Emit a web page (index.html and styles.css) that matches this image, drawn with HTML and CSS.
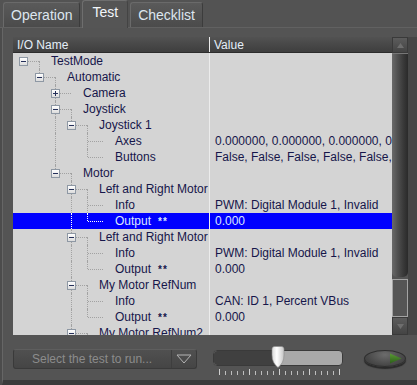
FILE: index.html
```html
<!DOCTYPE html>
<html lang="en">
<head>
  <meta charset="UTF-8">
  <title>Test</title>
  <link rel="stylesheet" href="styles.css">
</head>
<body>

<div class="tabs">
  <div class="tab">Operation</div>
  <div class="tab active">Test</div>
  <div class="tab">Checklist</div>
</div>

<div class="panel">
  <div class="grid">
    <div class="table">
      <div class="head">
        <div class="hcell name-col">I/O Name</div>
        <div class="hcell val-col">Value</div>
      </div>
      <div class="body" id="body"></div>
    </div>
    <div class="vscroll">
      <div class="sbtn up"><svg width="7" height="5" viewBox="0 0 7 5"><path d="M3.5 0 L7 5 H0 Z" fill="#6e6e6e"/></svg></div>
      <div class="thumb"></div>
      <div class="trough"></div>
      <div class="sbtn down"><svg width="7" height="5" viewBox="0 0 7 5"><path d="M0 0 H7 L3.5 5 Z" fill="#6e6e6e"/></svg></div>
    </div>
  </div>

  <div class="controls">
    <div class="select">
      <span class="select-text">Select the test to run...</span>
      <span class="select-arrow">
        <svg width="16" height="10" viewBox="0 0 16 10"><path d="M1 1 H15 L8 9 Z" fill="none" stroke="#b4b4b4" stroke-width="1"/></svg>
      </span>
    </div>
    <div class="slider">
      <div class="track">
        <div class="fill"></div>
        <svg class="knob" width="14" height="22" viewBox="0 0 14 22">
          <defs>
            <linearGradient id="kg" x1="0" y1="0" x2="1" y2="0">
              <stop offset="0" stop-color="#d8d8d8"/>
              <stop offset="0.4" stop-color="#ffffff"/>
              <stop offset="1" stop-color="#c4c4c4"/>
            </linearGradient>
          </defs>
          <path d="M1 3 Q1 0.5 3.5 0.5 H10.5 Q13 0.5 13 3 V9 Q13 17 7 21.5 Q1 17 1 9 Z" fill="url(#kg)" stroke="#8a8a8a" stroke-width="0.6"/>
        </svg>
      </div>
      <div class="ticks"></div>
    </div>
    <div class="run">
      <svg width="13" height="11" viewBox="0 0 13 11">
        <defs>
          <linearGradient id="pg" x1="0" y1="0" x2="0" y2="1">
            <stop offset="0" stop-color="#5a9a34"/>
            <stop offset="1" stop-color="#2c5e1a"/>
          </linearGradient>
        </defs>
        <path d="M1 0.5 L12.5 5.5 L1 10.5 Z" fill="url(#pg)"/>
      </svg>
    </div>
  </div>
</div>

<script>
  // label, value, cells (one char per indent cell), box on node cell, selected
  // cells: ' ' blank, p pipe, t tee, e elbow, r root, d line down to children
  const rows = [
    ['TestMode', '', 'rd', '-'],
    ['Automatic', '', ' ed', '-'],
    ['Camera', '', '  t ', '+'],
    ['Joystick', '', '  td', '-'],
    ['Joystick 1', '', '  ped', '-'],
    ['Axes', '0.000000, 0.000000, 0.000000, 0.000000', '  p t ', ''],
    ['Buttons', 'False, False, False, False, False, False', '  p e ', ''],
    ['Motor', '', '  ed', '-'],
    ['Left and Right Motor', '', '   td', '-'],
    ['Info', 'PWM: Digital Module 1, Invalid', '   pt ', ''],
    ['Output', '0.000', '   pe ', '', true],
    ['Left and Right Motor', '', '   td', '-'],
    ['Info', 'PWM: Digital Module 1, Invalid', '   pt ', ''],
    ['Output', '0.000', '   pe ', ''],
    ['My Motor RefNum', '', '   td', '-'],
    ['Info', 'CAN: ID 1, Percent VBus', '   pt ', ''],
    ['Output', '0.000', '   pe ', ''],
    ['My Motor RefNum2', '', '   td', '-']
  ];

  const kinds = { ' ': '', p: 'pipe', t: 'tee', e: 'elbow', r: 'root', d: 'down' };
  const body = document.getElementById('body');

  rows.forEach(([label, value, cells, box, sel]) => {
    const row = document.createElement('div');
    row.className = 'row' + (sel ? ' sel' : '');

    const name = document.createElement('div');
    name.className = 'name-col name';
    [...cells].forEach((ch, i) => {
      const c = document.createElement('span');
      c.className = 'c ' + kinds[ch];
      if (box && i === cells.length - 2) {
        const b = document.createElement('i');
        b.className = 'box ' + (box === '+' ? 'plus' : 'minus');
        c.appendChild(b);
      }
      name.appendChild(c);
    });

    const text = document.createElement('span');
    text.className = 'label';
    text.textContent = label;
    if (label === 'Output') {
      const m = document.createElement('span');
      m.className = 'mark';
      m.textContent = '**';
      text.appendChild(m);
    }
    name.appendChild(text);

    const val = document.createElement('div');
    val.className = 'val-col val';
    val.textContent = value;

    row.appendChild(name);
    row.appendChild(val);
    body.appendChild(row);
  });
</script>

</body>
</html>
```

FILE: styles.css
```css
body {
  margin: 0;
  width: 417px;
  height: 385px;
  overflow: hidden;
  background: #4c4c4c;
  font-family: "Liberation Sans", Arial, sans-serif;
}

/* tabs */
.tabs {
  display: flex;
  align-items: flex-end;
  gap: 2px;
  height: 27px;
  padding-left: 3px;
  background: #535353;
  border-bottom: 1px solid #616161;
}
.tab {
  box-sizing: border-box;
  height: 25px;
  padding: 0 7px;
  margin-bottom: 0;
  font-size: 14px;
  line-height: 25px;
  color: #dde6ef;
  background: linear-gradient(#5a5a5a, #4b4b4b);
  border: 1px solid #6a6a6a;
  border-right-color: #3c3c3c;
  border-bottom: none;
  border-radius: 3px 3px 0 0;
}
.tab.active {
  height: 28px;
  margin-bottom: -1px;
  padding: 0 9px;
  line-height: 22px;
  color: #f2f6fa;
  background: #555555;
  border-color: #6e6e6e;
  border-right-color: #444;
}

/* panel */
.panel {
  box-sizing: border-box;
  height: 357px;
  margin-left: 2px;
  padding: 9px 0 0 10px;
  background: #545454;
  border-left: 1px solid #666;
  border-bottom: 5px solid #3b3b3b;
}
.grid {
  display: flex;
  border-right: 9px solid #464646;
}
.table {
  width: 379px;
}

.head {
  display: flex;
  height: 16px;
  background: linear-gradient(#525252, #3e3e3e);
  border-bottom: 1px solid #2c2c2c;
  box-sizing: border-box;
}
.hcell {
  font-size: 12px;
  line-height: 16px;
  color: #e4eef8;
  white-space: nowrap;
}
.name-col {
  width: 197px;
  box-sizing: border-box;
  border-right: 1px solid #ececec;
  flex: none;
}
.val-col {
  flex: 1;
  min-width: 0;
}
.head .name-col {
  padding-left: 4px;
  border-radius: 0 0 0 0;
}
.head .val-col {
  padding-left: 4px;
}

.body {
  height: 282px;
  overflow: hidden;
  background: #d4d4d4;
}
.row {
  display: flex;
  height: 16px;
  font-size: 12px;
  color: #16164a;
}
.row.sel {
  background: #0000ff;
  color: #dbe6ff;
}
.name {
  display: flex;
  padding-left: 2px;
  overflow: hidden;
  white-space: nowrap;
}
.val {
  padding-left: 5px;
  overflow: hidden;
  white-space: nowrap;
  line-height: 15px;
  padding-top: 1px;
}
.label {
  margin-left: 4px;
  line-height: 15px;
  padding-top: 1px;
}
.mark {
  margin-left: 7px;
  font-size: 10px;
  font-weight: bold;
  letter-spacing: 1px;
  vertical-align: top;
}

/* tree connector cells */
.c {
  position: relative;
  flex: none;
  width: 16px;
  height: 16px;
}
.c.pipe::before,
.c.tee::before,
.c.elbow::before,
.c.down::before {
  content: "";
  position: absolute;
  left: 8px;
  top: 0;
  bottom: 0;
  border-left: 1px dotted #a2a2a2;
}
.c.elbow::before {
  bottom: 8px;
}
.c.down::before {
  top: 8px;
}
.c.tee::after,
.c.elbow::after,
.c.root::after {
  content: "";
  position: absolute;
  left: 9px;
  top: 8px;
  width: 15px;
  border-top: 1px dotted #a2a2a2;
}
.sel .c::before,
.sel .c::after {
  border-color: #ffffff;
}

.box {
  position: absolute;
  left: 4px;
  top: 4px;
  width: 9px;
  height: 9px;
  box-sizing: border-box;
  border: 1px solid #8e98a4;
  background: linear-gradient(#ffffff, #dcdcdc);
  z-index: 1;
}
.box::before {
  content: "";
  position: absolute;
  left: 1px;
  top: 3px;
  width: 5px;
  height: 1px;
  background: #25305a;
}
.box.plus::after {
  content: "";
  position: absolute;
  left: 3px;
  top: 1px;
  width: 1px;
  height: 5px;
  background: #25305a;
}

/* scrollbar */
.vscroll {
  display: flex;
  flex-direction: column;
  width: 16px;
}
.sbtn {
  display: flex;
  align-items: center;
  justify-content: center;
  height: 16px;
  background: linear-gradient(#5c5c5c, #444);
  border: 1px solid #3a3a3a;
  box-sizing: border-box;
}
.sbtn.down {
  height: 18px;
}
.thumb {
  height: 224px;
  background: linear-gradient(to right, #6a6a6a, #505050 35%, #3a3a3a 70%, #2a2a2a);
  border-top: 1px solid #777;
  border-radius: 0 0 5px 5px;
  box-sizing: border-box;
}
.trough {
  flex: 1;
  margin-top: 2px;
  background: #555;
  border: 1px solid #a4a4a4;
}

/* bottom controls */
.controls {
  display: flex;
  align-items: flex-start;
  margin-top: 14px;
  width: 395px;
}
.select {
  display: flex;
  align-items: center;
  width: 184px;
  height: 20px;
  box-sizing: border-box;
  background: linear-gradient(#505050, #454545);
  border: 1px solid #3a3a3a;
  border-top-color: #5e5e5e;
  border-radius: 3px;
}
.select-text {
  flex: 1;
  padding-left: 18px;
  font-size: 12px;
  color: #8c8c8c;
  white-space: nowrap;
}
.select-arrow {
  display: flex;
  align-items: center;
  justify-content: center;
  width: 24px;
  height: 18px;
  border-left: 1px solid #3e3e3e;
}

.slider {
  margin-left: 16px;
  margin-top: 1px;
  width: 130px;
}
.track {
  position: relative;
  height: 16px;
  box-sizing: border-box;
  background: #a9a9a9;
  border: 1px solid #3a3a3a;
  border-radius: 4px;
}
.fill {
  width: 64px;
  height: 100%;
  background: #404040;
  border-radius: 3px 0 0 3px;
}
.knob {
  position: absolute;
  left: 57px;
  top: -5px;
}
.ticks {
  width: 121px;
  height: 6px;
  margin: 3px 0 0 6px;
  background:
    repeating-linear-gradient(to right, #cfcfcf 0 1px, transparent 1px 30px) top left / 121px 6px no-repeat,
    repeating-linear-gradient(to right, #bdbdbd 0 1px, transparent 1px 6px) bottom left / 121px 4px no-repeat;
}

.run {
  display: flex;
  align-items: center;
  justify-content: flex-end;
  width: 42px;
  height: 17px;
  margin-left: 21px;
  margin-top: 1px;
  padding-right: 3px;
  box-sizing: border-box;
  border-radius: 50%;
  background: radial-gradient(ellipse at 50% 25%, #6c6c6c, #4a4a4a 60%, #363636);
  border: 1px solid #2e2e2e;
  box-shadow: 0 2px 1px #2a2a2a;
}
```
